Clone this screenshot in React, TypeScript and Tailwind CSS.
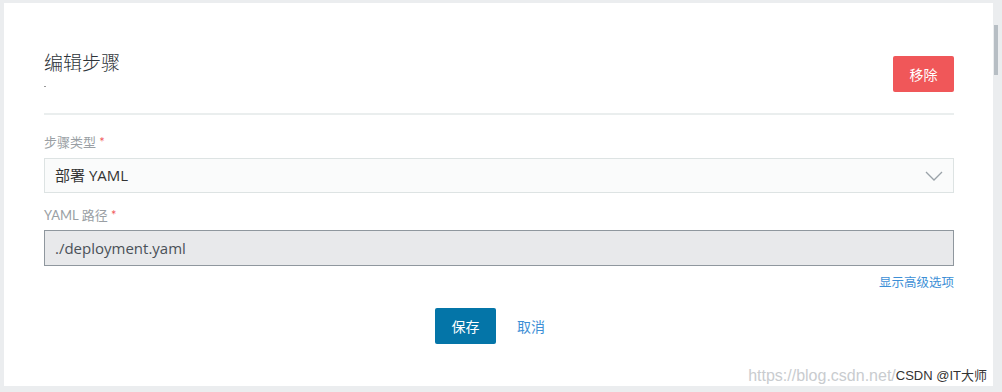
import React from "react";

const font = { fontFamily: 'Lato, "Noto Sans CJK SC", "Noto Sans", sans-serif' };
const inputFont = { fontFamily: '"Open Sans", "Noto Sans CJK SC", sans-serif' };

export default function App() {
  return (
    <div
      className="relative w-[1002px] h-[392px] bg-[#ebedef] flex overflow-hidden"
      style={font}
    >
      <div className="mt-[3px] ml-[4px] w-[989px] h-[383px] bg-white pl-[40px] pr-[39px] flex flex-col">
        <div className="flex items-start justify-between pt-[45px]">
          <div className="flex flex-col">
            <h1 className="text-[19px] leading-[30px] font-light text-[#2d3338]">编辑步骤</h1>
            <div className="mt-[8px] h-[1px] w-[2px] bg-[#999]" />
          </div>
          <button className="mt-[8px] w-[61px] h-[36px] rounded-[2px] bg-[#f05759] text-white text-[14px]">
            移除
          </button>
        </div>
        <div className="mt-[21px] h-[2px] bg-[#eaeeee]" />
        <label className="mt-[19px] text-[13px] leading-[16px] text-[#9a9fa4]">
          步骤类型 <span className="text-[#f05759]">*</span>
        </label>
        <div className="mt-[8px] h-[35px] border border-[#dde3e3] bg-[#fafbfb] flex items-center justify-between pl-[10px] pr-[10px]">
          <span className="text-[15px] text-[#333]" style={inputFont}>部署 YAML</span>
          <svg width="18" height="10" viewBox="0 0 18 10" fill="none">
            <path d="M1 1l8 8 8-8" stroke="#9aa2a8" strokeWidth="1.3" />
          </svg>
        </div>
        <label className="mt-[14px] text-[13px] leading-[16px] text-[#9a9fa4]">
          YAML 路径 <span className="text-[#f05759]">*</span>
        </label>
        <div className="mt-[7px] h-[36px] border border-[#8f979e] bg-[#e8e9eb] flex items-center pl-[10px]">
          <span className="text-[15px] text-[#4a5158]" style={inputFont}>./deployment.yaml</span>
        </div>
        <div className="mt-[9px] flex justify-end">
          <span className="text-[12.5px] leading-[16px] text-[#3d8fd6]">显示高级选项</span>
        </div>
        <div className="mt-[17px] flex items-center justify-center gap-[21px] pr-[18px]">
          <button className="w-[61px] h-[36px] rounded-[2px] bg-[#0475a8] text-white text-[14px]">
            保存
          </button>
          <span className="text-[14px] text-[#3d8fd6]">取消</span>
        </div>
      </div>
      <div className="relative w-[9px] h-full">
        <div className="absolute left-[1px] top-[25px] w-[4px] h-[50px] bg-[#b7bec4]" />
      </div>
      <div
        className="absolute right-[15px] bottom-[8px] flex items-end leading-[16px]"
        style={{ fontFamily: '"Liberation Sans", "Noto Sans CJK SC", sans-serif' }}
      >
        <span className="text-[#c9cccf] text-[16px]">https://blog.csdn.net/</span>
        <span className="text-[#333] text-[13px]">CSDN @IT大师</span>
      </div>
    </div>
  );
}
